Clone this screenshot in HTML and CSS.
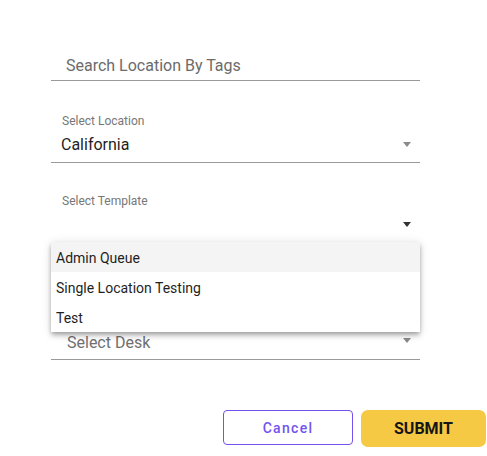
FILE: index.html
```html
<!DOCTYPE html>
<html>
<head>
<meta charset="utf-8">
<link rel="stylesheet" href="styles.css">
</head>
<body>
<div class="form">
  <div class="search">Search Location By Tags</div>

  <div class="field field-first">
    <div class="label">Select Location</div>
    <div class="value">
      <span class="text">California</span>
      <span class="arrow"></span>
    </div>
  </div>

  <div class="field field-open">
    <div class="label">Select Template</div>
    <div class="value">
      <span class="text"></span>
      <span class="arrow arrow-dark"></span>
    </div>
    <div class="menu">
      <div class="item item-active">Admin Queue</div>
      <div class="item">Single Location Testing</div>
      <div class="item">Test</div>
    </div>
  </div>

  <div class="field field-desk">
    <div class="value">
      <span class="text placeholder">Select Desk</span>
      <span class="arrow arrow-high"></span>
    </div>
  </div>
</div>

<div class="actions">
  <button class="btn btn-cancel">Cancel</button>
  <button class="btn btn-submit">SUBMIT</button>
</div>
</body>
</html>
```

FILE: styles.css
```css
html, body {
  margin: 0;
  padding: 0;
  background: #ffffff;
}

body {
  font-family: Roboto, "Liberation Sans", Arial, sans-serif;
  width: 487px;
  height: 456px;
  overflow: hidden;
}

.form {
  padding: 50px 0 0 51px;
  width: 369px;
}

.search {
  font-size: 16px;
  line-height: 20px;
  color: #6b6b6b;
  padding: 6px 0 4px 15px;
  border-bottom: 1px solid #9a9a9a;
}

.field {
  position: relative;
  margin-top: 30px;
  border-bottom: 1px solid #9a9a9a;
}

.field-first {
  margin-top: 32px;
}

.field-open {
  border-bottom-color: #2f8ded;
}

.label {
  font-size: 12px;
  line-height: 14px;
  color: #777777;
  padding: 1px 0 0 11px;
  margin-bottom: 7px;
}

.value {
  display: flex;
  align-items: flex-start;
  justify-content: space-between;
  height: 20px;
  padding: 0 9px 7px 10px;
}

.text {
  font-size: 16px;
  line-height: 20px;
  color: #1f1f1f;
}

.placeholder {
  color: #707070;
  padding-left: 6px;
}

.arrow {
  width: 0;
  height: 0;
  margin-top: 7px;
  border-left: 4px solid transparent;
  border-right: 4px solid transparent;
  border-top: 5px solid #8a8a8a;
}

.arrow-dark {
  border-top-color: #333333;
}

.arrow-high {
  margin-top: 5px;
}

.field-desk {
  margin-top: 90px;
}

.field-desk .value {
  padding-bottom: 6px;
}

.menu {
  position: absolute;
  top: 100%;
  left: 0;
  right: 0;
  background: #ffffff;
  z-index: 5;
  box-shadow: 0 2px 4px -1px rgba(0, 0, 0, 0.25),
              0 4px 5px 0 rgba(0, 0, 0, 0.16),
              0 1px 10px 0 rgba(0, 0, 0, 0.12);
}

.item {
  box-sizing: border-box;
  height: 30px;
  line-height: 30px;
  padding: 1px 0 0 5px;
  font-size: 14px;
  color: #1f1f1f;
}

.item-active {
  background: #f4f4f4;
}

.actions {
  display: flex;
  justify-content: flex-end;
  align-items: flex-start;
  gap: 8px;
  padding-right: 1px;
  margin-top: 50px;
}

.btn {
  font-family: Roboto, "Liberation Sans", Arial, sans-serif;
  cursor: pointer;
  padding: 0;
  box-sizing: border-box;
}

.btn-cancel {
  width: 130px;
  height: 35px;
  background: #ffffff;
  border: 1px solid #7253ef;
  border-radius: 4px;
  color: #7253ef;
  font-size: 14px;
  font-weight: 500;
  letter-spacing: 1.3px;
}

.btn-submit {
  width: 125px;
  height: 37px;
  background: #f6c945;
  border: none;
  border-radius: 7px;
  color: #161616;
  font-size: 16px;
  font-weight: 700;
}
```
